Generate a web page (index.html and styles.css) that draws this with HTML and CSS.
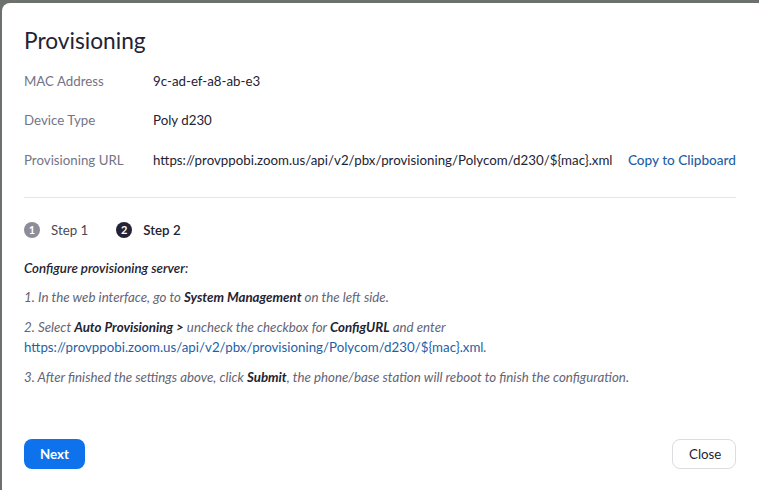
FILE: index.html
```html
<!DOCTYPE html>
<html>
<head>
<meta charset="utf-8">
<link rel="stylesheet" href="styles.css">
</head>
<body>
<div class="modal">
  <h1 class="title">Provisioning</h1>
  <div class="info">
    <div class="row"><span class="label">MAC Address</span><span class="value">9c-ad-ef-a8-ab-e3</span></div>
    <div class="row"><span class="label">Device Type</span><span class="value">Poly d230</span></div>
    <div class="row"><span class="label">Provisioning URL</span><span class="value">https://provppobi.zoom.us/api/v2/pbx/provisioning/Polycom/d230/${mac}.xml</span><a class="copy">Copy to Clipboard</a></div>
  </div>
  <div class="divider"></div>
  <div class="steps">
    <div class="step"><span class="num done">1</span><span>Step 1</span></div>
    <div class="step active"><span class="num cur">2</span><span>Step 2</span></div>
  </div>
  <div class="instructions">
    <p class="heading"><b>Configure provisioning server</b>:</p>
    <p>1. In the web interface, go to <b>System Management</b> on the left side.</p>
    <p>2. Select <b>Auto Provisioning &gt;</b> uncheck the checkbox for <b>ConfigURL</b> and enter<br><a class="link">https://provppobi.zoom.us/api/v2/pbx/provisioning/Polycom/d230/${mac}.xml</a>.</p>
    <p>3. After finished the settings above, click <b>Submit</b>, the phone/base station will reboot to finish the configuration.</p>
  </div>
  <div class="footer">
    <button class="btn primary">Next</button>
    <button class="btn secondary">Close</button>
  </div>
</div>
</body>
</html>
```

FILE: styles.css
```css
html, body {
  margin: 0;
  padding: 0;
  height: 100%;
}
body {
  background: #6d716e;
  font-family: Lato, "Open Sans", sans-serif;
  color: #232333;
  overflow: hidden;
}
.modal {
  background: #fff;
  margin: 3px 0 0 2px;
  height: calc(100% - 3px);
  border-top-left-radius: 8px;
  padding: 23px 23px 0 22px;
  box-sizing: border-box;
  display: flex;
  flex-direction: column;
}
.title {
  margin: 0;
  font-size: 22.7px;
  font-weight: 400;
  line-height: 30px;
  color: #232333;
}
.info {
  margin-top: 5px;
}
.row {
  display: flex;
  align-items: center;
  height: 39.5px;
  font-size: 13.3px;
}
.label {
  width: 129px;
  color: #747487;
}
.value {
  color: #232333;
}
.copy {
  margin-left: auto;
  color: #1f5fa6;
  font-weight: 500;
  font-size: 13.6px;
}
.divider {
  height: 1px;
  background: #e4e4e8;
  margin-top: 17px;
}
.steps {
  display: flex;
  gap: 28px;
  margin-top: 22px;
  height: 20px;
  align-items: center;
  font-size: 13.3px;
  color: #4a4a5a;
}
.step {
  display: flex;
  align-items: center;
  gap: 11px;
}
.step.active {
  color: #232333;
  font-weight: 600;
}
.num {
  width: 16px;
  height: 16px;
  border-radius: 50%;
  color: #fff;
  font-size: 11px;
  font-weight: 700;
  display: flex;
  align-items: center;
  justify-content: center;
}
.num.done { background: #8c8c9a; }
.num.cur { background: #232333; }
.instructions {
  margin-top: 18px;
  font-size: 13.3px;
  font-style: italic;
  color: #646474;
  line-height: 20px;
}
.instructions p {
  margin: 0 0 10px 0;
}
.instructions .heading {
  color: #232333;
  margin-bottom: 9px;
}
.instructions .heading b {
  font-weight: 600;
}
.instructions b {
  color: #232333;
  font-weight: 700;
}
.link {
  font-style: normal;
  color: #1f5fa6;
}
.footer {
  margin-top: 42px;
  display: flex;
  justify-content: space-between;
}
.btn {
  height: 30px;
  border-radius: 8px;
  font-family: Lato, "Open Sans", sans-serif;
  font-size: 13.3px;
  padding: 0 16px;
  cursor: pointer;
}
.btn.primary {
  background: #0e72ed;
  border: none;
  color: #fff;
  font-weight: 700;
  width: 61px;
}
.btn.secondary {
  background: #fff;
  border: 1px solid #dcdce0;
  color: #232333;
  width: 64px;
}
```
